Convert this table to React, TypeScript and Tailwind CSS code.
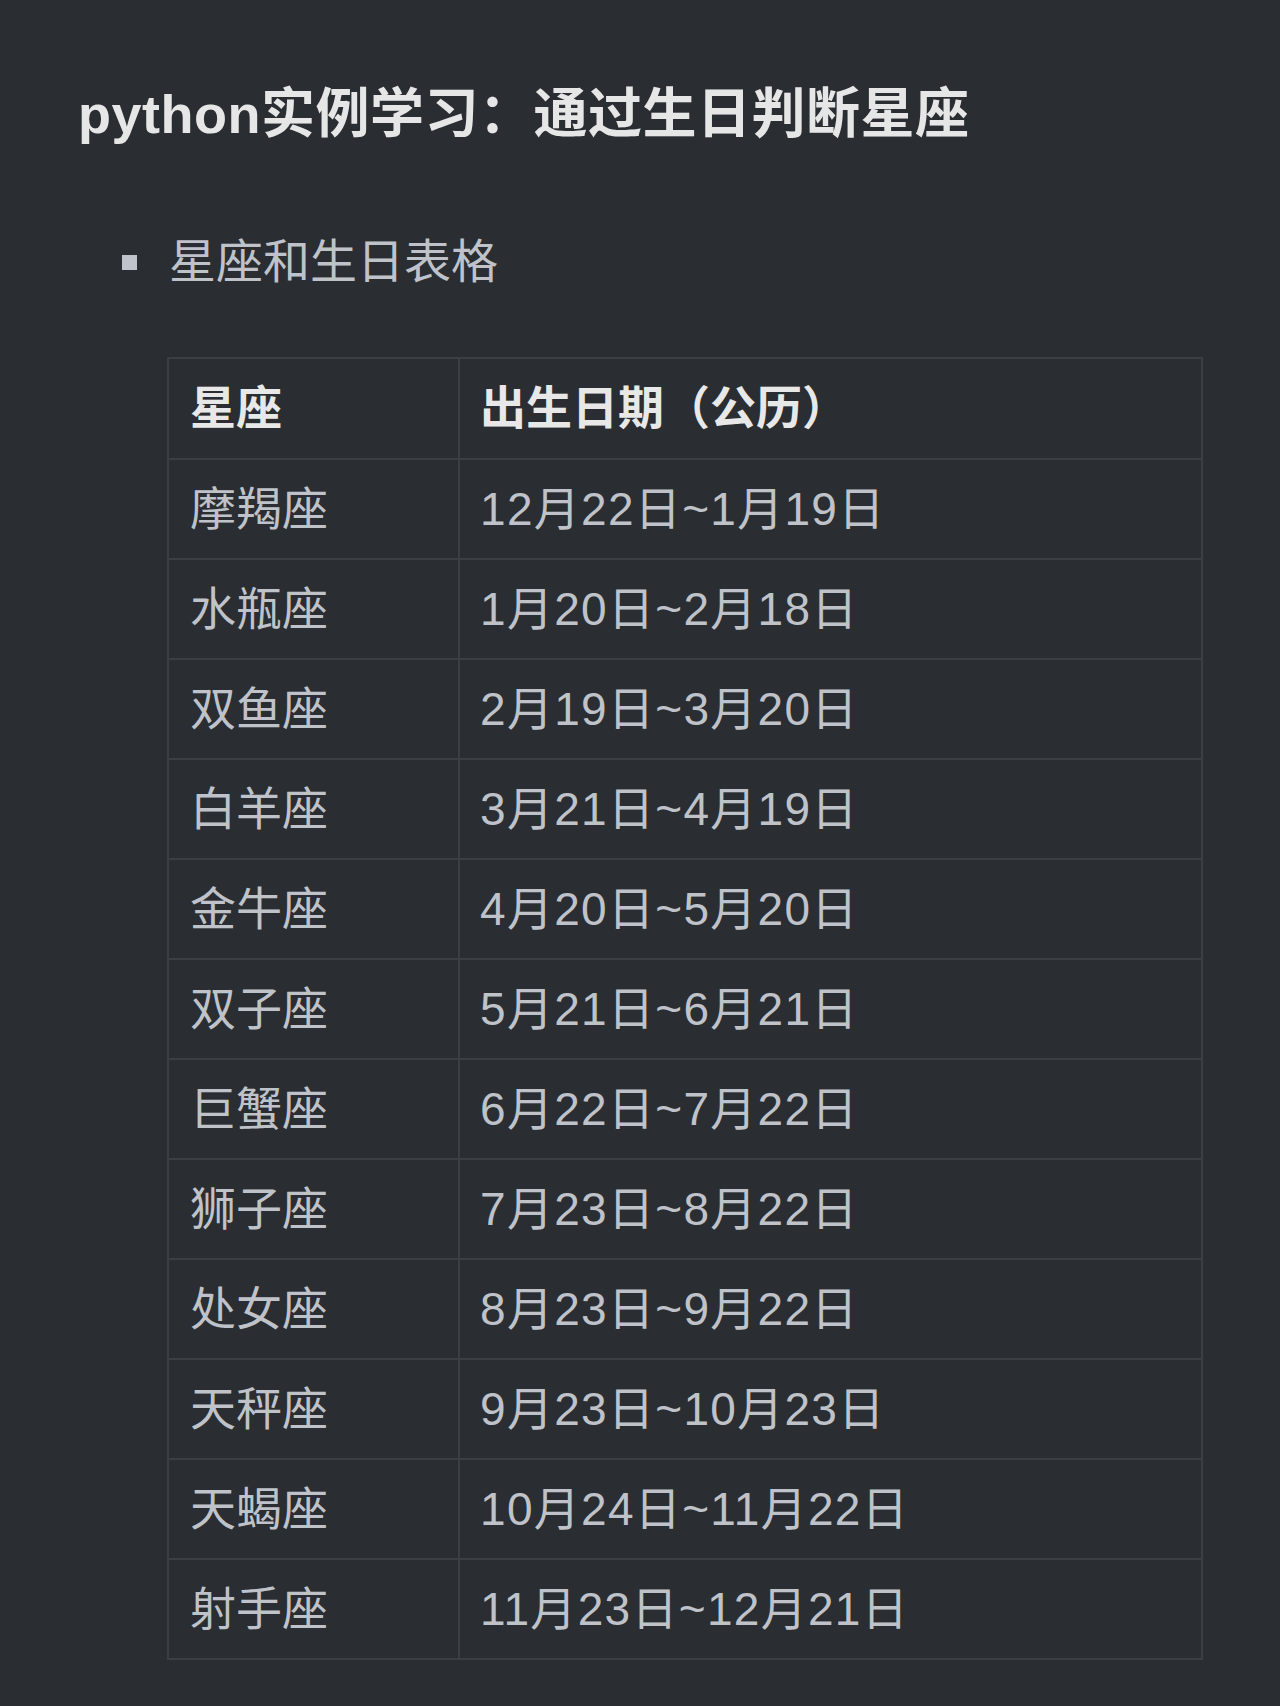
const font = 'font-["Liberation_Sans","Noto_Sans_CJK_SC",sans-serif]'

const rows = [
  ['摩羯座', '12月22日~1月19日'],
  ['水瓶座', '1月20日~2月18日'],
  ['双鱼座', '2月19日~3月20日'],
  ['白羊座', '3月21日~4月19日'],
  ['金牛座', '4月20日~5月20日'],
  ['双子座', '5月21日~6月21日'],
  ['巨蟹座', '6月22日~7月22日'],
  ['狮子座', '7月23日~8月22日'],
  ['处女座', '8月23日~9月22日'],
  ['天秤座', '9月23日~10月23日'],
  ['天蝎座', '10月24日~11月22日'],
  ['射手座', '11月23日~12月21日'],
]

export default function App() {
  return (
    <div className={`min-h-screen bg-[#2a2d31] ${font}`}>
      <div className="pl-[78px] pt-[82px] pb-[47px]">
        {/* Title */}
        <h1 className="text-[54px] leading-[64px] font-bold tracking-[0.5px] text-[#e6e6e6]">
          python实例学习：通过生日判断星座
        </h1>

        {/* Bullet */}
        <ul className="mt-[88px] pl-[44px]">
          <li className="flex items-center h-[56px]">
            <span className="w-[15px] h-[15px] bg-[#c0c4ca] mr-[32px]" />
            <span className="text-[47px] leading-[56px] text-[#bfc3c9]">星座和生日表格</span>
          </li>
        </ul>

        {/* Table */}
        <table className="mt-[67px] ml-[89px] w-[1036px] border-collapse border-2 border-[#3b3f44] text-[46px]">
          <thead>
            <tr className="h-[101px]">
              <th className="w-[291px] border-2 border-[#3b3f44] pl-[21px] text-left font-bold text-[#e8e8e8]">星座</th>
              <th className="border-2 border-[#3b3f44] pl-[20px] text-left font-bold text-[#e8e8e8]">出生日期（公历）</th>
            </tr>
          </thead>
          <tbody>
            {rows.map(([sign, date]) => (
              <tr key={sign} className="h-[100px]">
                <td className="border-2 border-[#3b3f44] pl-[21px] text-[#bfc3c9]">{sign}</td>
                <td className="border-2 border-[#3b3f44] pl-[20px] text-[#bfc3c9] tracking-[1.3px]">{date}</td>
              </tr>
            ))}
          </tbody>
        </table>
      </div>
    </div>
  )
}
